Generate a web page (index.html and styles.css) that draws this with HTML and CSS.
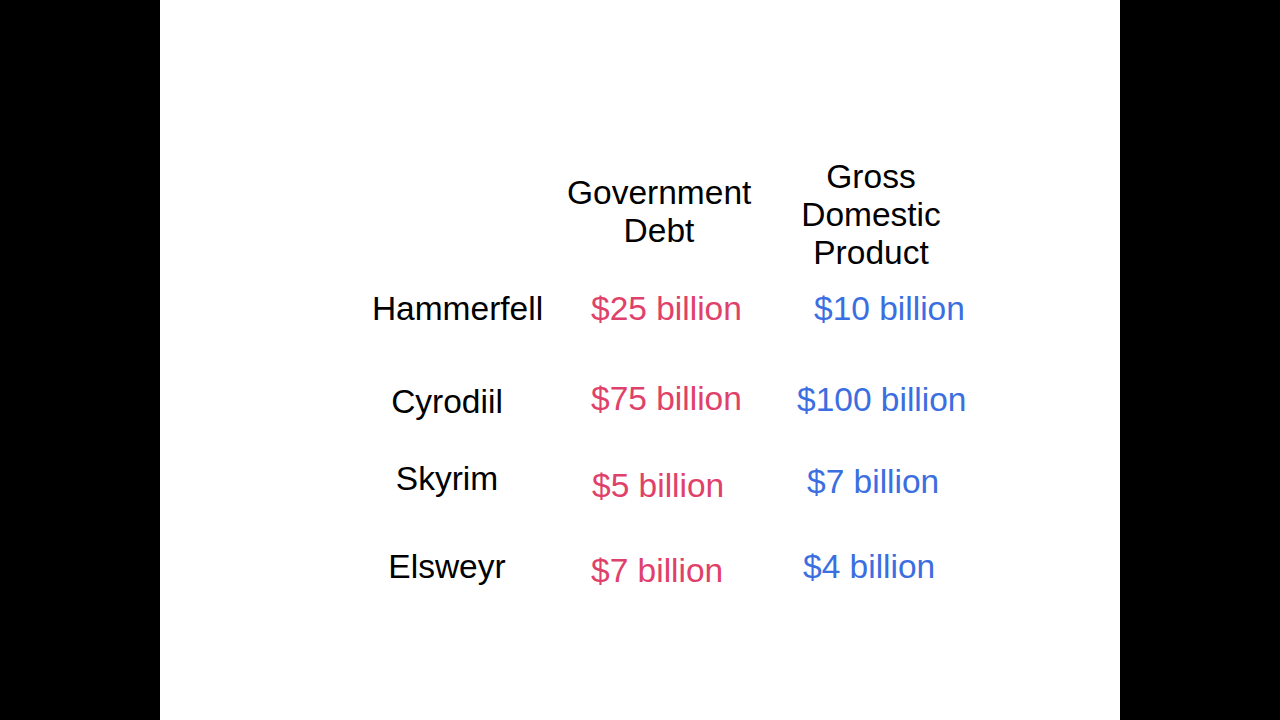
FILE: index.html
```html
<!DOCTYPE html>
<html lang="en">
<head>
<meta charset="utf-8">
<title>Government Debt vs Gross Domestic Product</title>
<link rel="stylesheet" href="styles.css">
</head>
<body>
<main class="slide">
  <div class="table">
    <div class="cell corner"></div>
    <div class="cell head head-debt">Government<br>Debt</div>
    <div class="cell head head-gdp">Gross<br>Domestic<br>Product</div>

    <div class="cell label label-hammerfell">Hammerfell</div>
    <div class="cell debt">$25 billion</div>
    <div class="cell gdp gdp-r1">$10 billion</div>

    <div class="cell label label-cyrodiil">Cyrodiil</div>
    <div class="cell debt debt-r2">$75 billion</div>
    <div class="cell gdp gdp-r2">$100 billion</div>

    <div class="cell label">Skyrim</div>
    <div class="cell debt debt-r3">$5 billion</div>
    <div class="cell gdp gdp-r3">$7 billion</div>

    <div class="cell label">Elsweyr</div>
    <div class="cell debt debt-r4">$7 billion</div>
    <div class="cell gdp gdp-r4">$4 billion</div>
  </div>
</main>
</body>
</html>
```

FILE: styles.css
```css
html, body {
  margin: 0;
  padding: 0;
  background: #000;
}

body {
  width: 1280px;
  height: 720px;
  overflow: hidden;
}

.slide {
  width: 960px;
  height: 720px;
  margin: 0 auto;
  background: #fff;
  box-sizing: border-box;
  padding: 158px 0 0 187px;
  font-family: "Liberation Sans", Arial, sans-serif;
  font-size: 33.5px;
  line-height: 38.5px;
  color: #000;
}

.table {
  display: grid;
  grid-template-columns: 200px 162px 200px;
  grid-template-rows: 132px 92px 78px 88px 60px;
  column-gap: 44px;
  align-items: start;
}

.cell {
  white-space: nowrap;
}

.head {
  line-height: 38px;
}

.head-debt {
  width: 184px;
  margin-left: -24px;
  margin-top: 16px;
  text-align: center;
}

.head-gdp {
  width: 148px;
  text-align: center;
}

.label {
  text-align: center;
}

.label-hammerfell {
  margin-left: 21px;
}

.label-cyrodiil {
  margin-top: 1px;
}

.debt {
  color: #e0416a;
}

.gdp {
  color: #3b6ee0;
}

.gdp-r1 {
  margin-left: 17px;
}

.debt-r2 {
  margin-top: -2px;
}

.gdp-r2 {
  margin-top: -1px;
}

.debt-r3 {
  margin-top: 7px;
  margin-left: 1px;
}

.gdp-r3 {
  margin-top: 3px;
  margin-left: 10px;
}

.debt-r4 {
  margin-top: 4px;
}

.gdp-r4 {
  margin-left: 6px;
}
```
